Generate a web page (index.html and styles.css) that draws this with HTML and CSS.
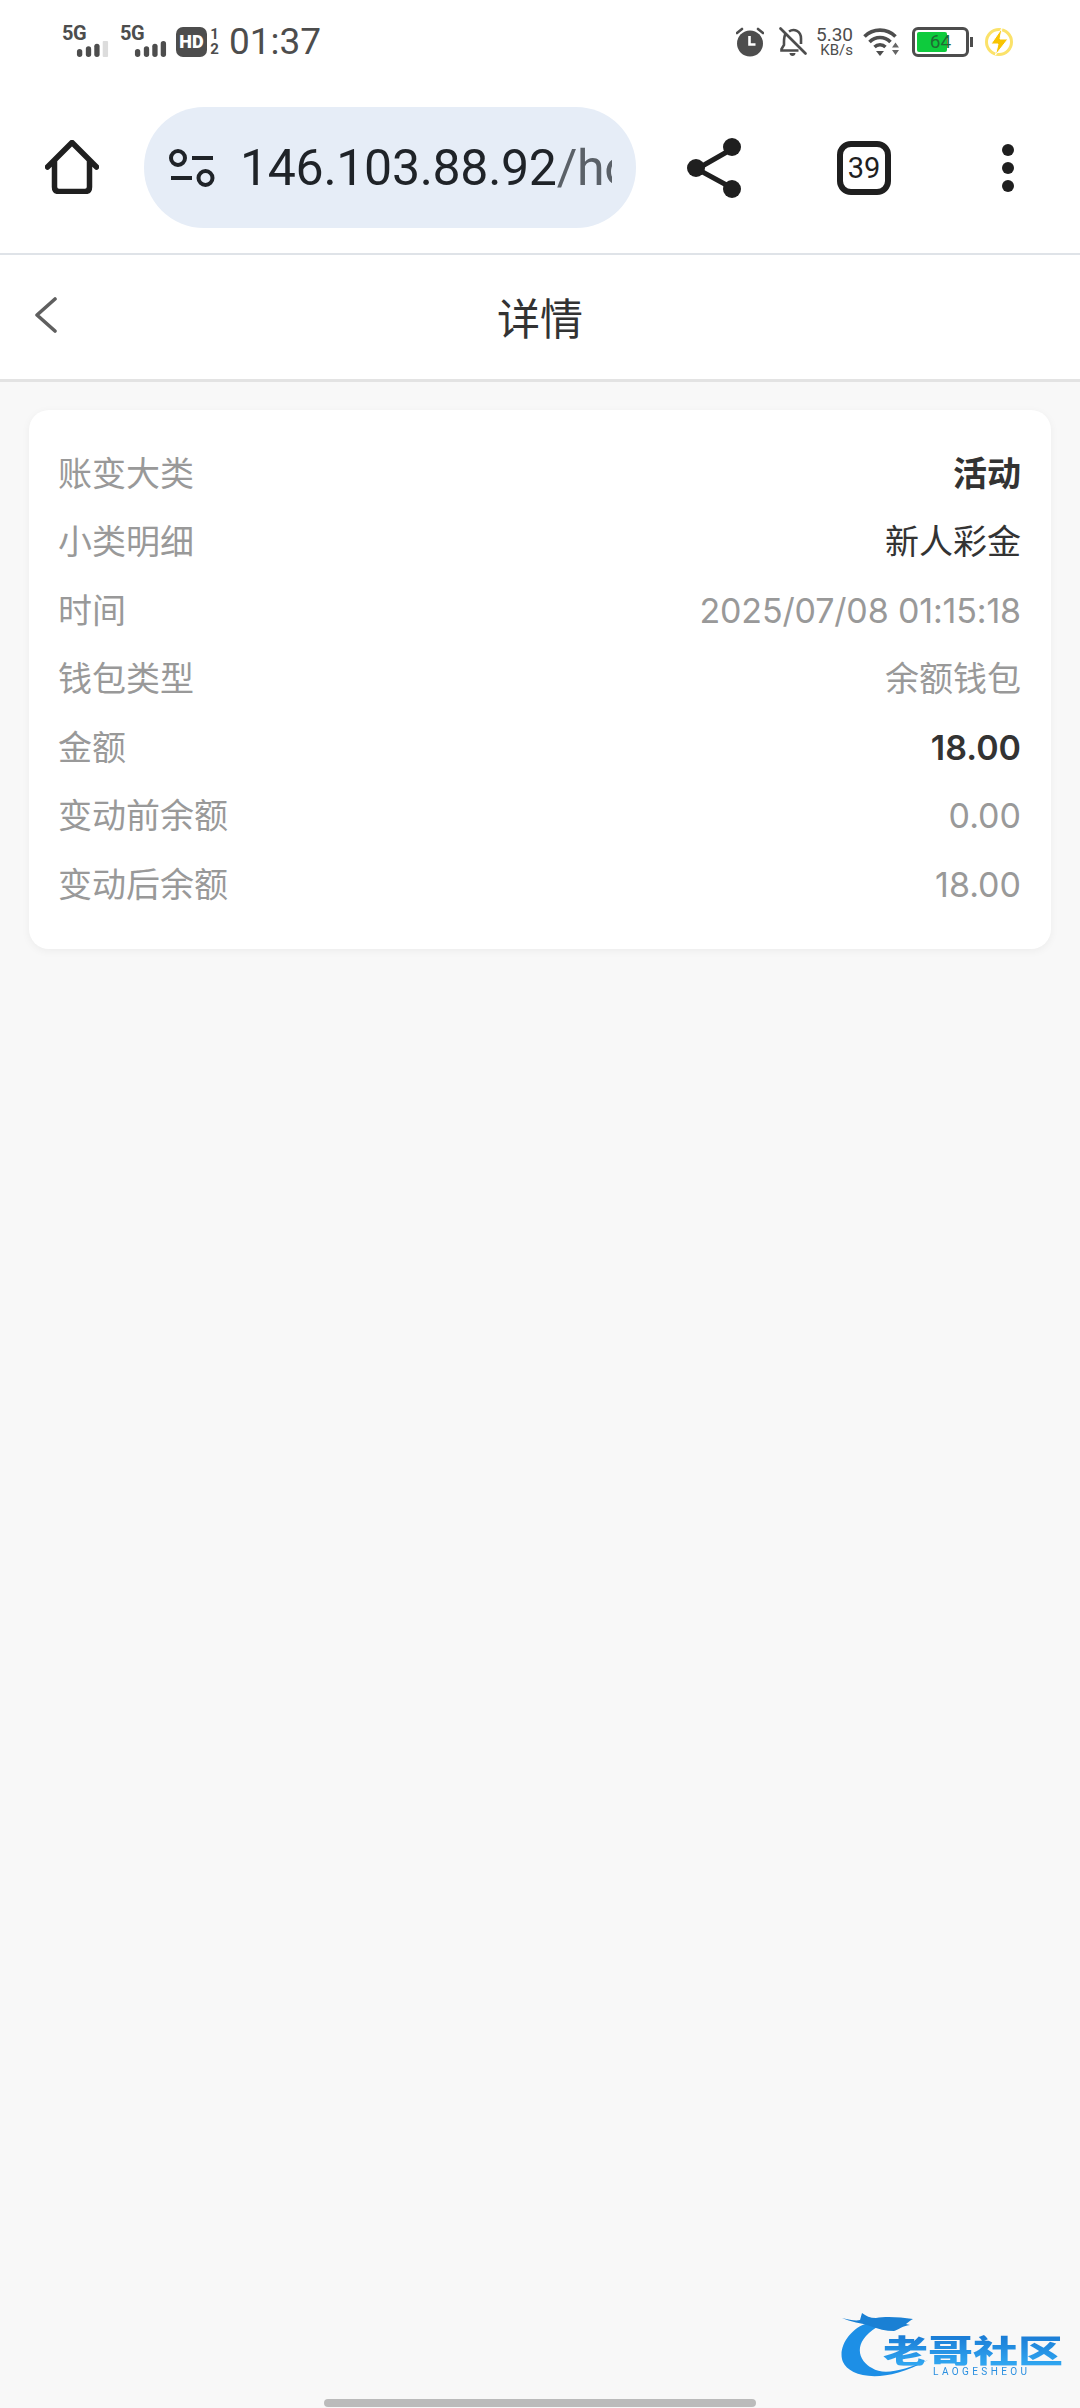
FILE: index.html
```html
<!DOCTYPE html>
<html lang="zh-CN">

<head>
    <meta charset="UTF-8">
    <meta name="viewport" content="width=device-width, initial-scale=1.0">
    <title>详情</title>
    <link rel="stylesheet" href="styles.css">
</head>

<body>
    <div class="status-bar">
        <div class="status-left">
            <div class="sim">
                <span class="sim-label">5G</span>
                <svg class="sim-bars" width="35" height="18" viewBox="0 0 35 18">
                    <rect x="0" y="9" width="6" height="9" rx="3" fill="#4d4d4d" />
                    <rect x="10" y="6" width="6" height="12" rx="3" fill="#4d4d4d" />
                    <rect x="19.500" y="3" width="6" height="15" rx="3" fill="#4d4d4d" />
                    <rect x="29" y="0" width="6" height="18" rx="1" fill="#dcdcdc" />
                </svg>
            </div>
            <div class="sim">
                <span class="sim-label">5G</span>
                <svg class="sim-bars" width="35" height="18" viewBox="0 0 35 18">
                    <rect x="0" y="9" width="6" height="9" rx="3" fill="#4d4d4d" />
                    <rect x="10" y="6" width="6" height="12" rx="3" fill="#4d4d4d" />
                    <rect x="19.500" y="3" width="6" height="15" rx="3" fill="#4d4d4d" />
                    <rect x="29" y="0" width="6" height="18" rx="3" fill="#4d4d4d" />
                </svg>
            </div>
            <div class="hd-badge">HD</div>
            <div class="hd-nums"><span>1</span><span>2</span></div>
            <div class="clock">01:37</div>
        </div>
        <div class="status-right">
            <svg width="28" height="30" viewBox="0 0 28 30">
                <circle cx="14" cy="16.500" r="13" fill="#4d4d4d" />
                <path d="M13.500 9v8.500h6" fill="none" stroke="#fff" stroke-width="2.600" />
                <path d="M1 6l5-4M27 6l-5-4" stroke="#4d4d4d" stroke-width="2.600" stroke-linecap="round" />
            </svg>
            <svg class="bell" width="28" height="30" viewBox="0 0 28 30">
                <path d="M7 6.500C4.500 9 5 13 5 18l-2.500 4v1.500h17M10 4.500c5-3.500 12-.5 12 7v5.500" fill="none" stroke="#4d4d4d" stroke-width="2.600" />
                <path d="M1.500 1.500l25 25" stroke="#4d4d4d" stroke-width="2.600" stroke-linecap="round" />
                <path d="M10.500 26h6c0 4-6 4-6 0z" fill="#4d4d4d" />
            </svg>
            <div class="net-speed"><span class="speed-num">5.30</span><span class="speed-unit">KB/s</span></div>
            <svg class="wifi" width="36" height="28" viewBox="0 0 36 28">
                <path d="M1.500 8.500c8.500-8.500 22.500-8.500 31 0" fill="none" stroke="#4d4d4d" stroke-width="3.600" />
                <path d="M6.500 14c6-6 15-6 21 0" fill="none" stroke="#4d4d4d" stroke-width="3.600" />
                <path d="M11.500 19c3-3 8-3 11 0" fill="none" stroke="#4d4d4d" stroke-width="3.400" />
                <path d="M13 23h8l-4 5z" fill="#4d4d4d" />
                <path d="M29 19.500h7l-3.500-5zM29 22h7l-3.500 5z" fill="#666" />
            </svg>
            <div class="battery">
                <div class="battery-body">
                    <div class="battery-fill"></div>
                    <span class="battery-num">64</span>
                </div>
                <div class="battery-tip"></div>
            </div>
            <svg class="charge" width="30" height="30" viewBox="0 0 30 30">
                <circle cx="15" cy="15" r="12.500" fill="none" stroke="#fbe26a" stroke-width="3" />
                <path d="M18 1L7 17h7l-2.500 11L24 12h-8z" fill="#f8c400" stroke="#fff" stroke-width="1" />
            </svg>
        </div>
    </div>

    <div class="toolbar">
        <svg class="home-icon" width="54" height="54" viewBox="0 0 54 54">
            <path d="M2.500 27L27 2.500 51.500 27M9.500 21v26c0 3 1.500 4.500 4.500 4.500h26c3 0 4.500-1.500 4.500-4.500V21" fill="none" stroke="#1f1f1f" stroke-width="5.500" stroke-linecap="round" stroke-linejoin="round" />
        </svg>
        <div class="url-pill">
            <svg class="tune-icon" width="46" height="40" viewBox="0 0 46 40">
                <circle cx="9" cy="10" r="7" fill="none" stroke="#1f2328" stroke-width="4" />
                <path d="M23 10h21" stroke="#1f2328" stroke-width="4" />
                <path d="M2 30h21" stroke="#1f2328" stroke-width="4" />
                <circle cx="36.500" cy="30" r="7" fill="none" stroke="#1f2328" stroke-width="4" />
            </svg>
            <div class="url-text">146.103.88.92<span>/home</span></div>
        </div>
        <svg class="share-icon" width="54" height="60" viewBox="0 0 54 60">
            <path d="M45 11L10 31l35 19" fill="none" stroke="#1f1f1f" stroke-width="5" />
            <circle cx="45" cy="9" r="9" fill="#1f1f1f" />
            <circle cx="9" cy="30" r="9" fill="#1f1f1f" />
            <circle cx="45" cy="51" r="9" fill="#1f1f1f" />
        </svg>
        <div class="tab-count">39</div>
        <div class="more-dots"><span></span><span></span><span></span></div>
    </div>

    <div class="page-header">
        <svg class="back-icon" width="24" height="36" viewBox="0 0 24 36">
            <path d="M21 2L3 18l18 16" fill="none" stroke="#5f5f5f" stroke-width="3.600" stroke-linecap="round" stroke-linejoin="round" />
        </svg>
        <h1>详情</h1>
    </div>

    <div class="main">
        <div class="card">
            <div class="row"><span class="label">账变大类</span><span class="value cjk strong">活动</span></div>
            <div class="row"><span class="label">小类明细</span><span class="value cjk dark">新人彩金</span></div>
            <div class="row"><span class="label">时间</span><span class="value date">2025/07/08 01:15:18</span></div>
            <div class="row"><span class="label">钱包类型</span><span class="value cjk">余额钱包</span></div>
            <div class="row"><span class="label">金额</span><span class="value strong">18.00</span></div>
            <div class="row"><span class="label">变动前余额</span><span class="value">0.00</span></div>
            <div class="row"><span class="label">变动后余额</span><span class="value">18.00</span></div>
        </div>
    </div>

    <!-- watermark sits over the page -->
    <div class="watermark">
        <svg class="dragon" width="95" height="72" viewBox="0 0 95 72">
            <path d="M28 11C10 16-3 36 3 50c6 14 38 24 85-2-24 10-44 16-56 8C20 50 10 32 37 15z" fill="#1d8fe6" />
            <path d="M2 6c8 2 14 3 18 2l2-7c4 3 8 5 14 5 10-2 24-1 37 1-5 3-7 5-7 5l4 1c-8 1-12 5-16 6-8 0-16-2-24-5C22 11 10 10 2 6z" fill="#1a80d4" />
        </svg>
        <div class="wm-name">老哥社区</div>
        <div class="wm-sub">LAOGESHEOU</div>
    </div>

    <div class="home-bar"></div>
</body>

</html>
```

FILE: styles.css
```css
/*General*/
* {
    margin: 0;
    padding: 0;
    box-sizing: border-box;
}

html {
    font-family: 'Inter', 'Noto Sans CJK SC', sans-serif;
}

body {
    position: relative;
    height: 2408px;
    overflow: hidden;
    background-color: #f8f8f8;
}

/*Status bar*/
.status-bar {
    display: flex;
    justify-content: space-between;
    align-items: center;
    height: 84px;
    padding: 0 66px 0 62px;
    background-color: #fff;
    color: #4d4d4d;
}

.status-left,
.status-right {
    display: flex;
    align-items: center;
}

.sim {
    display: flex;
    flex-direction: column;
    width: 48px;
    height: 32px;
    margin-right: 10px;
    margin-top: -2px;
}

.sim-label {
    font-family: 'Roboto', sans-serif;
    font-size: 20px;
    font-weight: 700;
    line-height: 16px;
    letter-spacing: -0.5px;
}

.sim-bars {
    margin-left: 13px;
}

.hd-badge {
    width: 31px;
    height: 30px;
    border-radius: 7px;
    background-color: #4d4d4d;
    color: #fff;
    font-family: 'Roboto', sans-serif;
    font-size: 18px;
    font-weight: 900;
    line-height: 30px;
    text-align: center;
    margin-left: -2px;
}

.hd-nums {
    display: flex;
    flex-direction: column;
    align-items: center;
    width: 11px;
    margin-left: 2px;
    font-family: 'Roboto', sans-serif;
    font-size: 15px;
    font-weight: 700;
    line-height: 15px;
}

.clock {
    margin-left: 9px;
    font-family: 'Roboto', sans-serif;
    font-size: 37px;
    line-height: 40px;
}

.bell {
    margin-left: 15px;
}

.net-speed {
    display: flex;
    flex-direction: column;
    align-items: flex-end;
    width: 40px;
    margin-left: 6px;
    font-family: 'Roboto', sans-serif;
}

.speed-num {
    font-size: 19px;
    line-height: 17px;
}

.speed-unit {
    font-size: 15px;
    line-height: 15px;
}

.wifi {
    margin-left: 10px;
}

.battery {
    display: flex;
    align-items: center;
    margin-left: 13px;
}

.battery-body {
    position: relative;
    width: 57px;
    height: 30px;
    border: 3px solid #4d4d4d;
    border-radius: 6px;
    padding: 2px;
}

.battery-fill {
    width: 64%;
    height: 100%;
    background-color: #0ecb3d;
    border-radius: 2px;
}

.battery-num {
    position: absolute;
    left: 0;
    right: 0;
    top: 0;
    font-family: 'Roboto', sans-serif;
    font-size: 19px;
    line-height: 24px;
    text-align: center;
    color: #1f6b33;
}

.battery-tip {
    width: 3px;
    height: 10px;
    margin-left: 1px;
    background-color: #4d4d4d;
}

.charge {
    margin-left: 11px;
}

/*Toolbar*/
.toolbar {
    display: flex;
    align-items: center;
    height: 171px;
    background-color: #fff;
    border-bottom: 2px solid #dfe3e8;
    padding-bottom: 2px;
}

.home-icon {
    margin-left: 45px;
    margin-top: -1px;
}

.url-pill {
    display: flex;
    align-items: center;
    width: 492px;
    height: 121px;
    margin-left: 45px;
    padding: 0 24px 0 25px;
    border-radius: 60px;
    background-color: #e6edf7;
}

.tune-icon {
    flex-shrink: 0;
}

.url-text {
    margin-left: 25px;
    overflow: hidden;
    white-space: nowrap;
    font-family: 'Roboto', sans-serif;
    font-size: 50px;
    letter-spacing: -0.3px;
    color: #1f2328;
}

.url-text span {
    color: #5b6168;
}

.share-icon {
    margin-left: 51px;
}

.tab-count {
    width: 54px;
    height: 54px;
    margin-left: 96px;
    border: 6px solid #1f1f1f;
    border-radius: 14px;
    font-family: 'Roboto', sans-serif;
    font-size: 29px;
    line-height: 42px;
    text-align: center;
    color: #1f1f1f;
}

.more-dots {
    display: flex;
    flex-direction: column;
    gap: 6px;
    margin-left: 111px;
}

.more-dots span {
    width: 12px;
    height: 12px;
    border-radius: 50%;
    background-color: #1f1f1f;
}

/*Page header*/
.page-header {
    position: relative;
    display: flex;
    align-items: center;
    justify-content: center;
    height: 127px;
    background-color: #fff;
    border-bottom: 3px solid #e3e3e3;
}

.page-header h1 {
    font-family: 'Noto Sans CJK SC', sans-serif;
    font-size: 43px;
    font-weight: 400;
    line-height: 60px;
    margin-top: -3px;
    color: #333;
}

.back-icon {
    position: absolute;
    left: 34px;
    top: 42px;
}

/*Card*/
.main {
    padding: 28px 29px;
}

.card {
    padding: 29px 30px 30px 29px;
    background-color: #fff;
    border-radius: 20px;
    box-shadow: 0 2px 8px rgba(0, 0, 0, 0.05);
}

.row {
    display: flex;
    justify-content: space-between;
    align-items: center;
    height: 68.5px;
    font-size: 34px;
}

.label,
.cjk {
    font-family: 'Noto Sans CJK SC', sans-serif;
    line-height: 44px;
    margin-top: -3px;
}

.label {
    color: #999;
}

.value {
    color: #999;
}

.value.date {
    letter-spacing: -0.15px;
}

.value.dark {
    color: #333;
}

.value.strong {
    color: #333;
    font-weight: 600;
}

/*Watermark*/
.watermark {
    position: absolute;
    left: 840px;
    top: 2312px;
    width: 230px;
    height: 72px;
    filter: blur(0.6px);
}

.dragon {
    position: absolute;
    left: 0;
    top: 0;
}

.wm-name {
    position: absolute;
    left: 43px;
    top: 14px;
    font-family: 'Noto Sans CJK SC', sans-serif;
    font-size: 45px;
    font-weight: 900;
    line-height: 46px;
    white-space: nowrap;
    transform: scaleY(0.72);
    background: linear-gradient(#1877d2, #31a8f2);
    -webkit-background-clip: text;
    background-clip: text;
    color: transparent;
}

.wm-sub {
    position: absolute;
    left: 93px;
    top: 55px;
    font-family: 'Roboto', sans-serif;
    font-size: 10px;
    line-height: 10px;
    letter-spacing: 3.4px;
    white-space: nowrap;
    color: #2a8fe0;
}

/*Gesture bar*/
.home-bar {
    position: absolute;
    left: 324px;
    bottom: 1px;
    width: 432px;
    height: 8px;
    border-radius: 4px;
    background-color: #bbb;
}
```
